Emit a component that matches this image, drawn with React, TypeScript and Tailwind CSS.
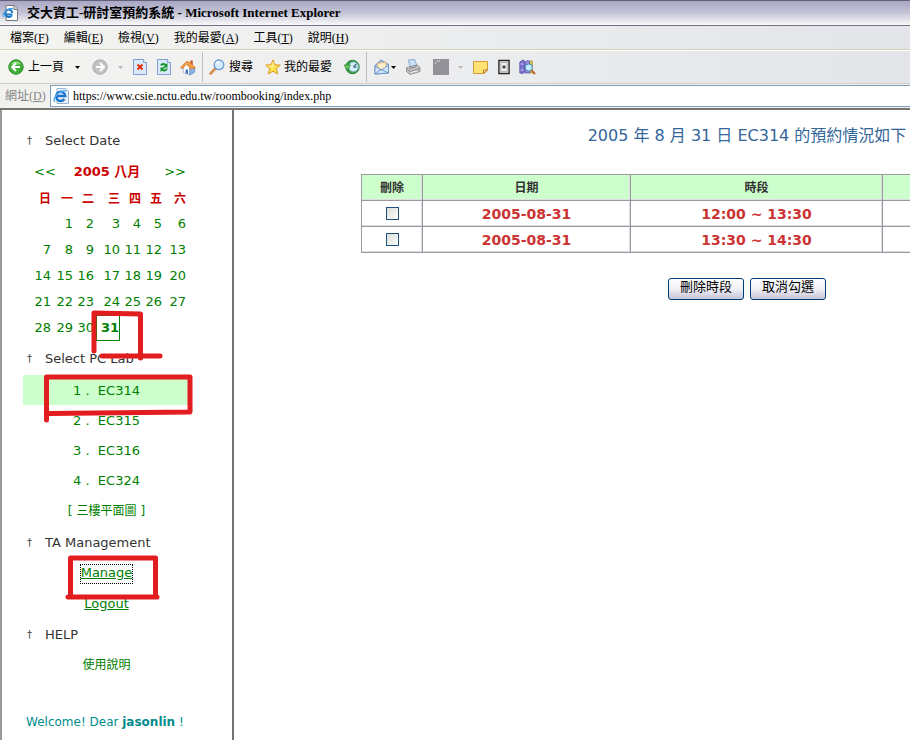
import type { ReactNode } from "react";

const serif = "font-['Liberation_Serif','Noto_Sans_CJK_TC',serif]";
const sans = "font-['DejaVu_Sans','Noto_Sans_CJK_TC',sans-serif]";

const menus = [
  ["檔案", "F"],
  ["編輯", "E"],
  ["檢視", "V"],
  ["我的最愛", "A"],
  ["工具", "T"],
  ["說明", "H"],
];

const weekdays = ["日", "一", "二", "三", "四", "五", "六"];
const columns = ["w-[21px]", "w-[22px]", "w-[21px]", "w-[26px]", "w-[21px]", "w-[21px]", "w-[24px]"];
const weeks = [
  [0, 1, 2, 3, 4, 5, 6],
  [7, 8, 9, 10, 11, 12, 13],
  [14, 15, 16, 17, 18, 19, 20],
  [21, 22, 23, 24, 25, 26, 27],
  [28, 29, 30, 31, 0, 0, 0],
];
const labs = ["EC314", "EC315", "EC316", "EC324"];
const bookings = [
  { date: "2005-08-31", time: "12:00 ~ 13:30" },
  { date: "2005-08-31", time: "13:30 ~ 14:30" },
];
const cell = "border border-[#9b989f] p-0 shadow-[inset_-1px_-1px_0_#dedbe2]";

function PageIcon() {
  return (
    <svg width="16" height="16" viewBox="0 0 16 16" aria-hidden="true">
      <path d="M4 .5h8l3.500 3.500v11.500H4z" fill="#fff" stroke="#777" />
      <path d="M12 .5v4h3.500" fill="#ddd" stroke="#777" />
      <path d="M10.500 9.500H3.500a3.500 3.500 0 1 1 6.700-1.500" fill="none" stroke="#1c74c8" strokeWidth="2" />
      <path d="M3.500 9.500c.7 2.800 4.500 3.400 6.300 1" fill="none" stroke="#1c74c8" strokeWidth="2" />
      <path d="M1.500 12C-.5 8 8 1.500 11.500 4" fill="none" stroke="#4aa3e8" strokeWidth="1.200" />
    </svg>
  );
}

function ExplorerIcon() {
  return (
    <svg width="16" height="16" viewBox="0 0 16 16" aria-hidden="true">
      <path d="M4 .5h9l2.500 2.500v12.500H4z" fill="#e8f1fb" stroke="#9db5d2" />
      <path d="M11.500 11a4.600 4.600 0 1 1 .8-3H3.500" fill="none" stroke="#1c74c8" strokeWidth="2.400" />
      <path d="M2 14C-1.500 10 8 1 13.500 3" fill="none" stroke="#55aef0" strokeWidth="1.500" />
    </svg>
  );
}

function BackIcon() {
  return (
    <svg width="16" height="16" viewBox="0 0 16 16" aria-hidden="true">
      <circle cx="8" cy="8" r="7.200" fill="#3fae35" stroke="#2c8a28" />
      <path d="M3 5a6 6 0 0 1 10 0c-3 1-7 1-10 0z" fill="#8ad67c" />
      <path d="M8 4L4 8l4 4M4.500 8H12" fill="none" stroke="#fff" strokeWidth="2" />
    </svg>
  );
}

function ForwardIcon() {
  return (
    <svg width="16" height="16" viewBox="0 0 16 16" aria-hidden="true">
      <circle cx="8" cy="8" r="7.200" fill="#c2c2c2" stroke="#aaa" />
      <path d="M8 4l4 4-4 4M11.500 8H4" fill="none" stroke="#fff" strokeWidth="2" />
    </svg>
  );
}

function StopIcon() {
  return (
    <svg width="14" height="16" viewBox="0 0 14 16" aria-hidden="true">
      <path d="M.5 .5h10l3 3v12H.5z" fill="#dbe9fc" stroke="#7f9fd0" />
      <path d="M10.500 .5v3h3" fill="#fff" stroke="#7f9fd0" />
      <path d="M4.500 5.500l5 5M9.500 5.500l-5 5" stroke="#e03010" strokeWidth="2" />
    </svg>
  );
}

function RefreshIcon() {
  return (
    <svg width="14" height="16" viewBox="0 0 14 16" aria-hidden="true">
      <path d="M.5 .5h10l3 3v12H.5z" fill="#dbe9fc" stroke="#7f9fd0" />
      <path d="M10.500 .5v3h3" fill="#fff" stroke="#7f9fd0" />
      <path d="M4 6.500C5 4.500 8 4.500 9 6.500M10 9.500C9 12 6 12 5 10.500" fill="none" stroke="#16962a" strokeWidth="2" />
      <path d="M10.500 4v4.500H6zM3.500 13V8.500H8z" fill="#16962a" />
    </svg>
  );
}

function HomeIcon() {
  return (
    <svg width="16" height="17" viewBox="0 0 17 17" aria-hidden="true">
      <path d="M11 1h2.500v5H11z" fill="#c9562b" />
      <path d="M3.500 8v6l7 2.500V8L7 4z" fill="#fff" stroke="#8fa6cf" strokeWidth=".8" />
      <path d="M10.500 8.500l5 .5v4.500l-5 3z" fill="#8db5ea" stroke="#5f85c4" strokeWidth=".8" />
      <path d="M.5 8.500L7 2l3.500 1 6 6-5 1L7 5l-5 5z" fill="#f0a04a" stroke="#d27a2c" strokeWidth=".8" />
      <path d="M6 10.500l2.500.5v4.500L6 14.500z" fill="#3e6fbd" />
    </svg>
  );
}

function SearchIcon() {
  return (
    <svg width="16" height="16" viewBox="0 0 16 16" aria-hidden="true">
      <path d="M6.500 9.500L1.500 14.500" stroke="#d68d4c" strokeWidth="2.500" strokeLinecap="round" />
      <circle cx="10" cy="5.800" r="4.800" fill="#d5ecfd" stroke="#6d9bd3" strokeWidth="1.300" />
      <path d="M7.500 5a3 3 0 0 1 3-2.200" fill="none" stroke="#fff" strokeWidth="1.500" />
    </svg>
  );
}

function StarIcon() {
  return (
    <svg width="16" height="16" viewBox="0 0 16 16" aria-hidden="true">
      <path d="M8 .8l2 5 5.300.3-4 3.500 1.400 5.400L8 12.200 3.300 15l1.400-5.400-4-3.500 5.300-.3z" fill="#ffe04e" stroke="#dc9c28" />
      <path d="M8 3v5L4 7" fill="none" stroke="#fff6b8" />
    </svg>
  );
}

function HistoryIcon() {
  return (
    <svg width="16" height="16" viewBox="0 0 16 16" aria-hidden="true">
      <circle cx="8.500" cy="8" r="6.700" fill="#38a040" stroke="#287e37" />
      <circle cx="9.500" cy="7.800" r="4.800" fill="#d7effa" stroke="#7fb6ca" />
      <path d="M9.500 8l2.800-3M9.500 8.200h3" stroke="#3c687e" strokeWidth="1.200" />
      <path d="M0 6h6.500L3.500 11z" fill="#6fd05c" stroke="#287e37" strokeWidth=".7" />
    </svg>
  );
}

function MailIcon() {
  return (
    <svg width="16" height="16" viewBox="0 0 16 16" aria-hidden="true">
      <path d="M1 6.500L7 1l7.500 4.500V14L1 15z" fill="#a9cbf4" stroke="#6689c2" />
      <path d="M3.500 4.500L12 3v6L7.500 11 3.500 8z" fill="#fff1c8" stroke="#e2a95c" strokeWidth=".8" />
      <path d="M1 7l6.500 4 7-5V14L1 15z" fill="#cde4fc" stroke="#6689c2" strokeWidth=".8" />
      <path d="M1.500 14.500L7 10.500l7 3.300" fill="none" stroke="#6689c2" strokeWidth=".8" />
    </svg>
  );
}

function PrinterIcon() {
  return (
    <svg width="16" height="16" viewBox="0 0 16 16" aria-hidden="true">
      <path d="M3.500 1l6-.5L12 6.500 5 8z" fill="#c8e0fa" stroke="#7799c4" strokeWidth=".8" />
      <path d="M1.500 8.500L12 6l3 2.500v4L5 15.500l-3.500-3z" fill="#c4c4c4" stroke="#828282" strokeWidth=".8" />
      <path d="M2 10l3 2.500 9.500-2.800M4.500 9.500l7-1.800" fill="none" stroke="#777" strokeWidth=".8" />
      <path d="M6 13.500l6-1.800" stroke="#f4f4f4" />
    </svg>
  );
}

function BlankIcon() {
  return (
    <svg width="16" height="16" viewBox="0 0 16 16" aria-hidden="true">
      <path d="M0 0h16v16H0z" fill="#939298" />
      <path d="M4 2h1M6 2h1M2 4h1" stroke="#fff" />
    </svg>
  );
}

function NoteIcon() {
  return (
    <svg width="15" height="15" viewBox="0 0 15 15" aria-hidden="true">
      <path d="M.5 1.500h14V10L11 13.500H.5z" fill="#ffe474" stroke="#d59a3a" />
      <path d="M10.500 13.500V10h4z" fill="#fff6c4" stroke="#b67820" />
    </svg>
  );
}

function CardIcon() {
  return (
    <svg width="12" height="16" viewBox="0 0 13 16" aria-hidden="true">
      <path d="M1 1h11v14H1z" fill="#fff" stroke="#222" strokeWidth="1.500" />
      <path d="M3 3h7v10H3z" fill="#eee" stroke="#777" strokeWidth=".6" />
      <path d="M4.500 8h4M6.500 6v4M5.200 6.700l2.600 2.600M7.800 6.700L5.200 9.300" stroke="#222" strokeWidth=".8" />
    </svg>
  );
}

function ResearchIcon() {
  return (
    <svg width="17" height="16" viewBox="0 0 17 16" aria-hidden="true">
      <path d="M.8 3l3-2 2 1v11l-2 1.500-3-.5z" fill="#7a6fce" stroke="#5b51ac" strokeWidth=".8" />
      <path d="M6 3l3-1.500 2 1V14H6z" fill="#988fdf" stroke="#5b51ac" strokeWidth=".8" />
      <path d="M11 2h2.500v12H11z" fill="#e2ca52" stroke="#97822b" strokeWidth=".6" />
      <path d="M1.500 5h3M1.500 11h3" stroke="#cfcaf8" />
      <circle cx="9.800" cy="8.500" r="3.600" fill="#c6ecfb" stroke="#4988b8" />
      <path d="M12.500 11.300l3.500 3.700" stroke="#bb6b2c" strokeWidth="2" />
    </svg>
  );
}

function Tool({ label, className = "", children }: { label: string; className?: string; children: ReactNode }) {
  return (
    <button type="button" aria-label={label} className={`flex shrink-0 items-center ${className}`}>
      {children}
    </button>
  );
}

function Caret({ muted = false }: { muted?: boolean }) {
  return (
    <svg width="5" height="3" viewBox="0 0 5 3" aria-hidden="true">
      <path d="M0 0h5L2.500 3z" fill={muted ? "#b8b8b8" : "#000"} />
    </svg>
  );
}

function Section({ title }: { title: string }) {
  return (
    <h2 className="flex h-8 items-center gap-[11px] pl-1 text-[13px] text-[#333]">
      <span className="w-[7px] text-[10px] text-[#444]">†</span>
      {title}
    </h2>
  );
}

function Marks() {
  return (
    <svg
      className="pointer-events-none absolute -left-[2px] top-0"
      width="234"
      height="630"
      viewBox="0 110 234 630"
      fill="none"
      stroke="#e21d1f"
      strokeWidth="5"
      strokeLinecap="round"
      strokeLinejoin="round"
      aria-hidden="true"
    >
      <path d="M94 313V351M94 313l46.500 1V358M102 356H160" />
      <path d="M46.500 420V377H190V412L49 413.500" />
      <path d="M70.500 595V558H155.500V595M68 597H157" />
    </svg>
  );
}

export default function App() {
  return (
    <div className={`flex min-h-screen flex-col overflow-hidden bg-white ${sans}`}>
      <header className={`text-[12px] leading-4 text-black ${serif}`}>
        <div className="flex h-[26px] items-center gap-2 border-b border-t border-b-[#747088] border-t-[#62607a] bg-linear-to-b from-[#aaa7c5] via-[#c4c4d6] to-[#fafafa] pl-[2px]">
          <PageIcon />
          <h1 className="pl-px text-[13px] font-bold">交大資工-研討室預約系統 - Microsoft Internet Explorer</h1>
        </div>
        <nav className="flex h-6 items-center gap-[15px] border-b border-[#d5d0b0] bg-linear-to-r from-[#f4f4f1] to-[#e3e5ea] pl-[10px]">
          {menus.map(([name, key]) => (
            <button type="button" key={key}>
              {name}(<u>{key}</u>)
            </button>
          ))}
        </nav>
        <div className="flex h-[34px] items-center border-b border-t border-b-[#d0cec4] border-t-white bg-linear-to-r from-[#f4f4f1] to-[#e3e5ea] pl-2">
          <Tool label="上一頁" className="gap-1"><BackIcon />上一頁</Tool>
          <Tool label="上一頁選單" className="ml-[11px]"><Caret /></Tool>
          <Tool label="下一頁" className="ml-3"><ForwardIcon /></Tool>
          <Tool label="下一頁選單" className="ml-[10px]"><Caret muted /></Tool>
          <Tool label="停止" className="ml-[10px]"><StopIcon /></Tool>
          <Tool label="重新整理" className="ml-[10px]"><RefreshIcon /></Tool>
          <Tool label="首頁" className="ml-[9px]"><HomeIcon /></Tool>
          <span className="ml-[6px] h-[30px] w-px bg-[#bfbfc3]" />
          <Tool label="搜尋" className="ml-[6px] gap-1"><SearchIcon />搜尋</Tool>
          <Tool label="我的最愛" className="ml-3 gap-[3px]"><StarIcon />我的最愛</Tool>
          <Tool label="記錄" className="ml-3"><HistoryIcon /></Tool>
          <span className="ml-[6px] h-[30px] w-px bg-[#bfbfc3]" />
          <Tool label="郵件" className="ml-[7px] gap-px"><MailIcon /><Caret /></Tool>
          <Tool label="列印" className="ml-[9px]"><PrinterIcon /></Tool>
          <Tool label="編輯" className="ml-3"><BlankIcon /></Tool>
          <Tool label="編輯選單" className="ml-[9px]"><Caret muted /></Tool>
          <Tool label="討論" className="ml-[10px]"><NoteIcon /></Tool>
          <Tool label="字典" className="ml-[10px]"><CardIcon /></Tool>
          <Tool label="參考資料" className="ml-[9px]"><ResearchIcon /></Tool>
        </div>
        <div className="flex h-[26px] items-center border-b-2 border-[#77756f] bg-[#f1f1ee] pl-[5px]">
          <label htmlFor="address" className="w-[45px] shrink-0 text-[#888]">
            網址(<u>D</u>)
          </label>
          <div className="flex h-[22px] grow items-center gap-1 border border-r-0 border-[#7f9db9] bg-white pl-[2px]">
            <ExplorerIcon />
            <input
              id="address"
              type="text"
              defaultValue="https://www.csie.nctu.edu.tw/roombooking/index.php"
              className="h-5 grow bg-transparent outline-none"
            />
          </div>
        </div>
      </header>

      <div className="flex grow">
        <aside className="relative w-[234px] shrink-0 border-l-2 border-r-2 border-l-[#999] border-r-[#77736f] pl-[21px] pt-[15px] text-[13px] leading-4 text-[#008000]">
          <Section title="Select Date" />
          <div className="flex h-[29px] w-[167px] items-center justify-between pl-[11px] pr-1">
            <button type="button" aria-label="上個月">&lt;&lt;</button>
            <strong className="pr-[6px] text-[#c00]">2005 八月</strong>
            <button type="button" aria-label="下個月">&gt;&gt;</button>
          </div>
          <table className="mb-px ml-[7px] w-[156px] table-fixed text-right">
            <thead>
              <tr className="h-[25px] text-[12px] text-[#c00]">
                {weekdays.map((day, i) => (
                  <th key={day} scope="col" className={`text-right ${columns[i]}`}>{day}</th>
                ))}
              </tr>
            </thead>
            <tbody>
              {weeks.map((week) => (
                <tr key={week[1]} className="h-[26px]">
                  {week.map((day, i) => (
                    <td key={i} className="whitespace-nowrap">
                      {day === 31 ? (
                        <button type="button" className="h-[26px] w-6 border border-[#008000] bg-white text-right font-bold">31</button>
                      ) : day > 0 ? (
                        <button type="button">{day}</button>
                      ) : null}
                    </td>
                  ))}
                </tr>
              ))}
            </tbody>
          </table>
          <div className="pt-px">
            <Section title="Select PC Lab" />
          </div>
          <ol className="w-[167px] text-center">
            {labs.map((lab, i) => (
              <li key={lab} className={i === 0 ? "bg-[#ccffcc]" : ""}>
                <a href="#lab" className="block h-[30px] whitespace-pre leading-8">{`${i + 1} .  ${lab}`}</a>
              </li>
            ))}
          </ol>
          <p className="flex h-8 w-[167px] items-center justify-center gap-1 text-[12px]">
            [<a href="#map">三樓平面圖</a>]
          </p>
          <Section title="TA Management" />
          <ul className="w-[167px] text-center underline">
            <li className="flex h-[30px] items-center justify-center">
              <a href="#manage" className="h-[18px] outline-1 outline-dotted outline-black">Manage</a>
            </li>
            <li className="flex h-[30px] items-center justify-center">
              <a href="#logout">Logout</a>
            </li>
          </ul>
          <Section title="HELP" />
          <p className="flex h-[28px] w-[167px] items-center justify-center text-[12px]">
            <a href="#help">使用說明</a>
          </p>
          <p className="pl-[3px] pt-[35px] text-[12px] text-[#008b8b]">
            Welcome! Dear <b>jasonlin</b> !
          </p>
          <Marks />
        </aside>

        <main className="w-0 grow overflow-hidden">
          <div className="flex w-[1026px] flex-col items-center pt-[14px]">
            <h2 className="h-[50px] text-[16px] leading-6 text-[#336699]">2005 年 8 月 31 日 EC314 的預約情況如下</h2>
            <table className="w-[772px] table-fixed border-collapse text-center">
              <thead>
                <tr className="h-[26px] bg-[#ccffcc] text-[12px] text-[#333]">
                  <th scope="col" className={`w-[61px] ${cell}`}>刪除</th>
                  <th scope="col" className={`w-[208px] ${cell}`}>日期</th>
                  <th scope="col" className={`w-[252px] ${cell}`}>時段</th>
                  <th scope="col" className={cell} />
                </tr>
              </thead>
              <tbody>
                {bookings.map((row) => (
                  <tr key={row.time} className="h-[26px] text-[14px] font-bold leading-5 text-[#cc3333]">
                    <td className={cell}>
                      <input
                        type="checkbox"
                        aria-label={`刪除 ${row.time}`}
                        className="mx-auto block size-[13px] appearance-none border border-[#1c5180] bg-linear-to-br from-[#dcdcd7] to-white"
                      />
                    </td>
                    <td className={cell}>{row.date}</td>
                    <td className={cell}>{row.time}</td>
                    <td className={cell} />
                  </tr>
                ))}
              </tbody>
            </table>
            <div className="mt-[25px] flex gap-[6px] text-[13px] leading-4 text-black">
              {["刪除時段", "取消勾選"].map((label) => (
                <button
                  type="button"
                  key={label}
                  className="h-[22px] w-[76px] rounded-[3px] border border-[#003c74] bg-linear-to-b from-white via-[#f0f0f6] to-[#c4c4d8] pb-1"
                >
                  {label}
                </button>
              ))}
            </div>
          </div>
        </main>
      </div>
    </div>
  );
}
